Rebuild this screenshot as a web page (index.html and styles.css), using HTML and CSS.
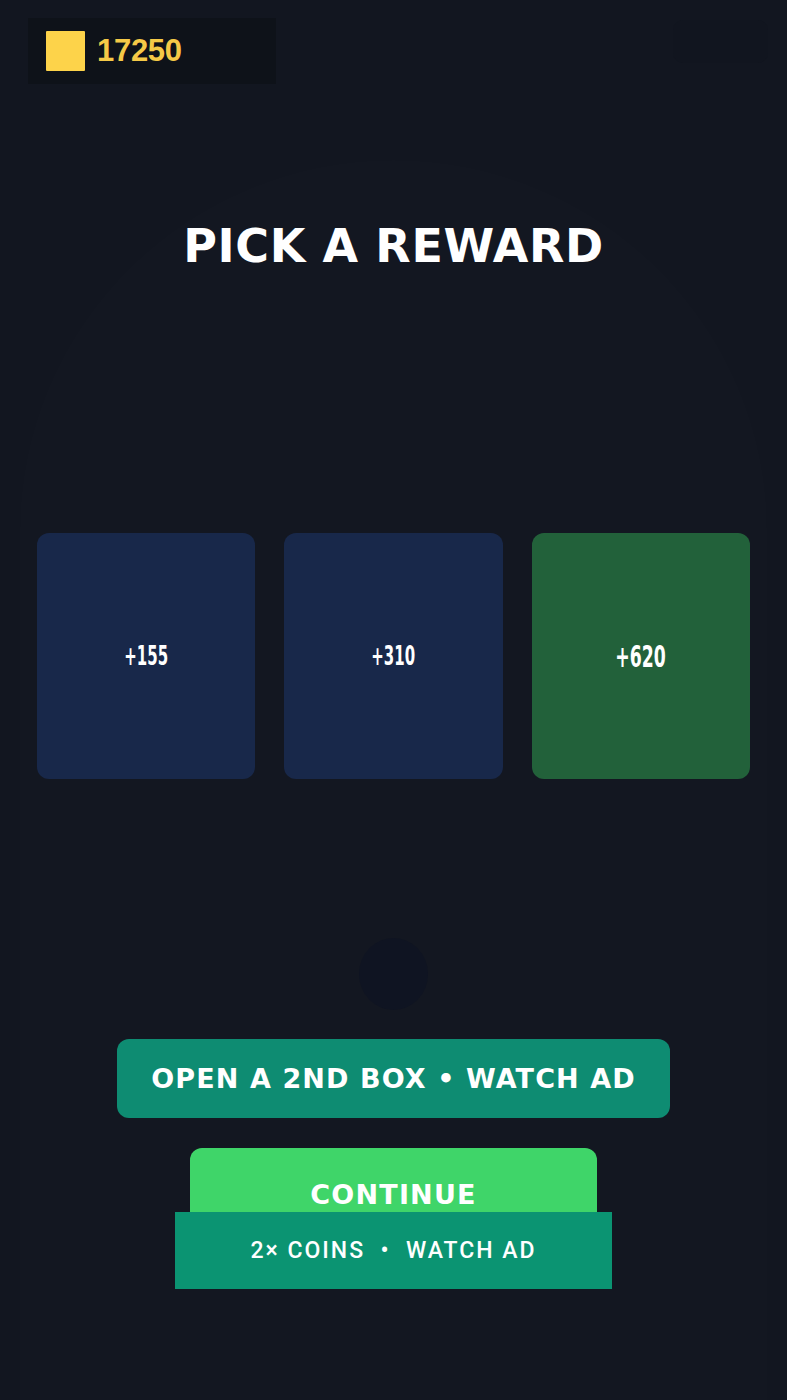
FILE: index.html
```html
<!DOCTYPE html>
<html lang="en">
<head>
<meta charset="utf-8">
<title>Pick a Reward</title>
<link rel="stylesheet" href="styles.css">
</head>
<body>
<div class="app">
  <div class="glow"></div>
  <header class="topbar">
    <div class="wallet">
      <span class="coin"></span>
      <span class="balance">17250</span>
    </div>
    <div class="ghost"></div>
  </header>

  <h1 class="title">PICK A REWARD</h1>

  <div class="cards">
    <div class="card"><span class="amount">+155</span></div>
    <div class="card"><span class="amount">+310</span></div>
    <div class="card card-best"><span class="amount">+620</span></div>
  </div>

  <div class="dot"></div>

  <button class="btn-open">OPEN A 2ND BOX • WATCH AD</button>

  <div class="continue-wrap">
    <button class="btn-continue">CONTINUE</button>
    <div class="ad-bar">2× COINS&nbsp;&nbsp;•&nbsp;&nbsp;WATCH AD</div>
  </div>
</div>
</body>
</html>
```

FILE: styles.css
```css
html, body {
  margin: 0;
  padding: 0;
}
body {
  background: #121620;
  font-family: "DejaVu Sans", "Liberation Sans", sans-serif;
  color: #fff;
}
.app {
  position: relative;
  width: 787px;
  height: 1400px;
  overflow: hidden;
  display: flex;
  flex-direction: column;
  align-items: center;
}
.glow {
  position: absolute;
  left: 20px;
  right: 20px;
  top: 160px;
  bottom: -300px;
  border-radius: 50% 50% 0 0 / 24% 24% 0 0;
  background: rgba(255, 255, 255, 0.006);
  pointer-events: none;
}
.topbar {
  position: relative;
  align-self: stretch;
  display: flex;
  justify-content: space-between;
  align-items: flex-start;
  padding: 18px 19px 0 28px;
}
.wallet {
  width: 248px;
  height: 66px;
  box-sizing: border-box;
  background: #0e1219;
  display: flex;
  align-items: center;
  gap: 12px;
  padding-left: 18px;
}
.coin {
  width: 39px;
  height: 40px;
  background: #fdd34a;
  border-radius: 1px;
}
.balance {
  font-family: "Liberation Sans", Arial, sans-serif;
  font-weight: 700;
  font-size: 31px;
  color: #f5c947;
  letter-spacing: -0.3px;
}
.ghost {
  margin-top: 2px;
  width: 95px;
  height: 43px;
  border-radius: 10px;
  background: #11151f;
}
.title {
  position: relative;
  margin: 135px 0 0;
  font-size: 46px;
  line-height: 54px;
  font-weight: 700;
  letter-spacing: 0.6px;
}
.cards {
  position: relative;
  align-self: stretch;
  margin-top: 260px;
  padding: 0 37px;
  display: grid;
  grid-template-columns: repeat(3, 1fr);
  gap: 29px;
}
.card {
  height: 246px;
  border-radius: 12px;
  background: #18284a;
  display: flex;
  align-items: center;
  justify-content: center;
  font-family: "DejaVu Sans Condensed", "DejaVu Sans", sans-serif;
  font-weight: 700;
  font-size: 26px;
}
.card-best {
  background: #22613a;
  font-size: 30px;
}
.amount {
  display: inline-block;
  transform: scaleX(0.64);
}
.dot {
  position: relative;
  margin-top: 159px;
  width: 69px;
  height: 72px;
  border-radius: 50%;
  background: #0f1422;
}
.btn-open {
  position: relative;
  margin-top: 29px;
  width: 553px;
  height: 79px;
  border: 0;
  border-radius: 12px;
  background: #0e8c72;
  color: #fff;
  font-family: "DejaVu Sans", sans-serif;
  font-weight: 700;
  font-size: 27px;
  letter-spacing: 1.1px;
  padding: 0;
}
.continue-wrap {
  position: relative;
  margin-top: 30px;
  width: 407px;
}
.btn-continue {
  display: flex;
  justify-content: center;
  align-items: flex-start;
  width: 100%;
  height: 82px;
  box-sizing: border-box;
  border: 0;
  border-radius: 12px;
  background: #3fd569;
  color: #fff;
  font-family: "DejaVu Sans", sans-serif;
  font-weight: 700;
  font-size: 27px;
  letter-spacing: 1.2px;
  line-height: 34px;
  padding: 30px 0 0;
}
.ad-bar {
  position: absolute;
  top: 64px;
  left: -15px;
  width: 437px;
  height: 77px;
  background: #0b9472;
  display: flex;
  align-items: center;
  justify-content: center;
  font-family: Roboto, "Liberation Sans", sans-serif;
  font-weight: 500;
  font-size: 23px;
  letter-spacing: 2px;
  color: #fff;
}
```
